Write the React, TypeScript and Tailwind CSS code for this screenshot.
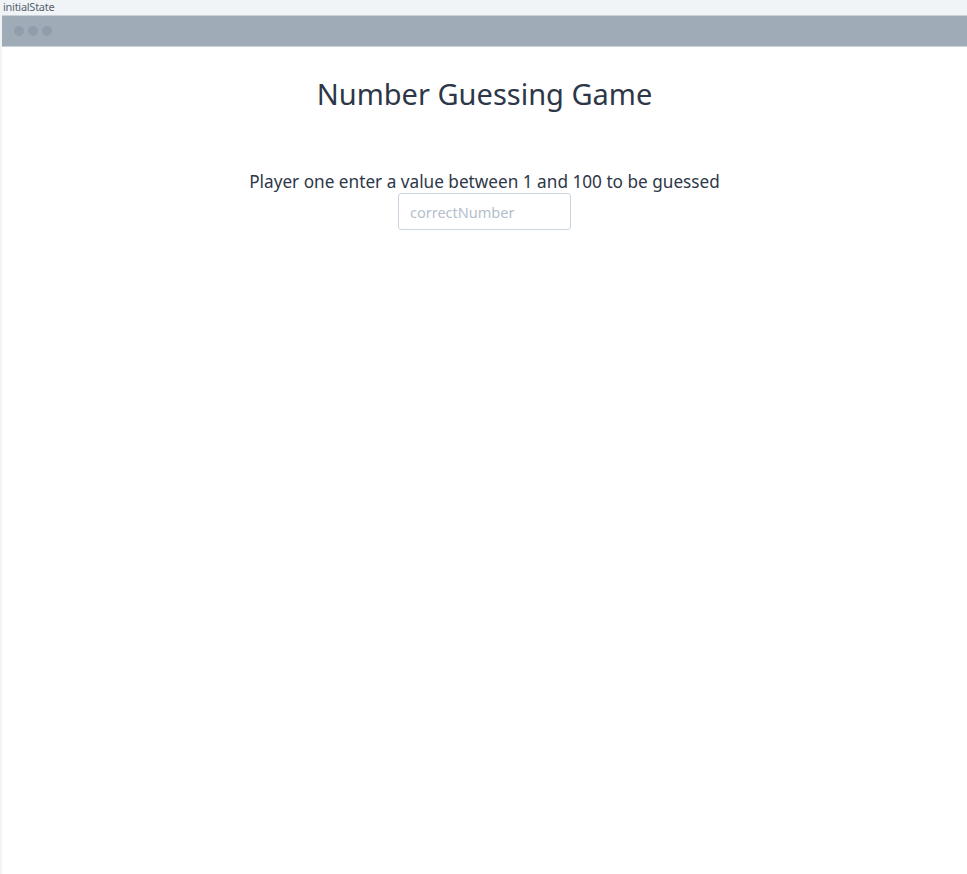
import React, { useState } from "react";

const font = { fontFamily: '"Noto Sans", "Open Sans", Arial, sans-serif' };

const App = () => {
  const [value, setValue] = useState("");

  return (
    <div className="min-h-screen w-full bg-[#f1f4f7] flex flex-col" style={font}>
      {/* label strip */}
      <div className="h-[15px] pl-[3px] text-[11px] leading-[13px] text-[#56616e] tracking-tight">
        initialState
      </div>

      {/* browser window */}
      <div className="flex-1 flex flex-col ml-[2px] bg-white">
        <div className="h-[32px] bg-[#9fabb7] border-y border-[#c9d1d9] flex items-center gap-[4px] pl-[12px]">
          <span className="w-[10px] h-[10px] rounded-full bg-[#919daa]" />
          <span className="w-[10px] h-[10px] rounded-full bg-[#919daa]" />
          <span className="w-[10px] h-[10px] rounded-full bg-[#919daa]" />
        </div>

        <div className="flex flex-col items-center text-[#2d3748]">
          <h1 className="mt-[29px] text-[29px] leading-[36px] font-normal">
            Number Guessing Game
          </h1>
          <label className="mt-[59px] text-[17.2px] leading-[22px]" htmlFor="correctNumber">
            Player one enter a value between 1 and 100 to be guessed
          </label>
          <input
            id="correctNumber"
            className="mt-0 w-[173px] h-[37px] px-[11px] text-[14.5px] border border-[#cbd5e0] rounded-[3px] placeholder:text-[#b4c0cc] outline-none"
            placeholder="correctNumber"
            value={value}
            onChange={(e) => setValue(e.target.value)}
          />
        </div>
      </div>
    </div>
  );
};

export default App;
